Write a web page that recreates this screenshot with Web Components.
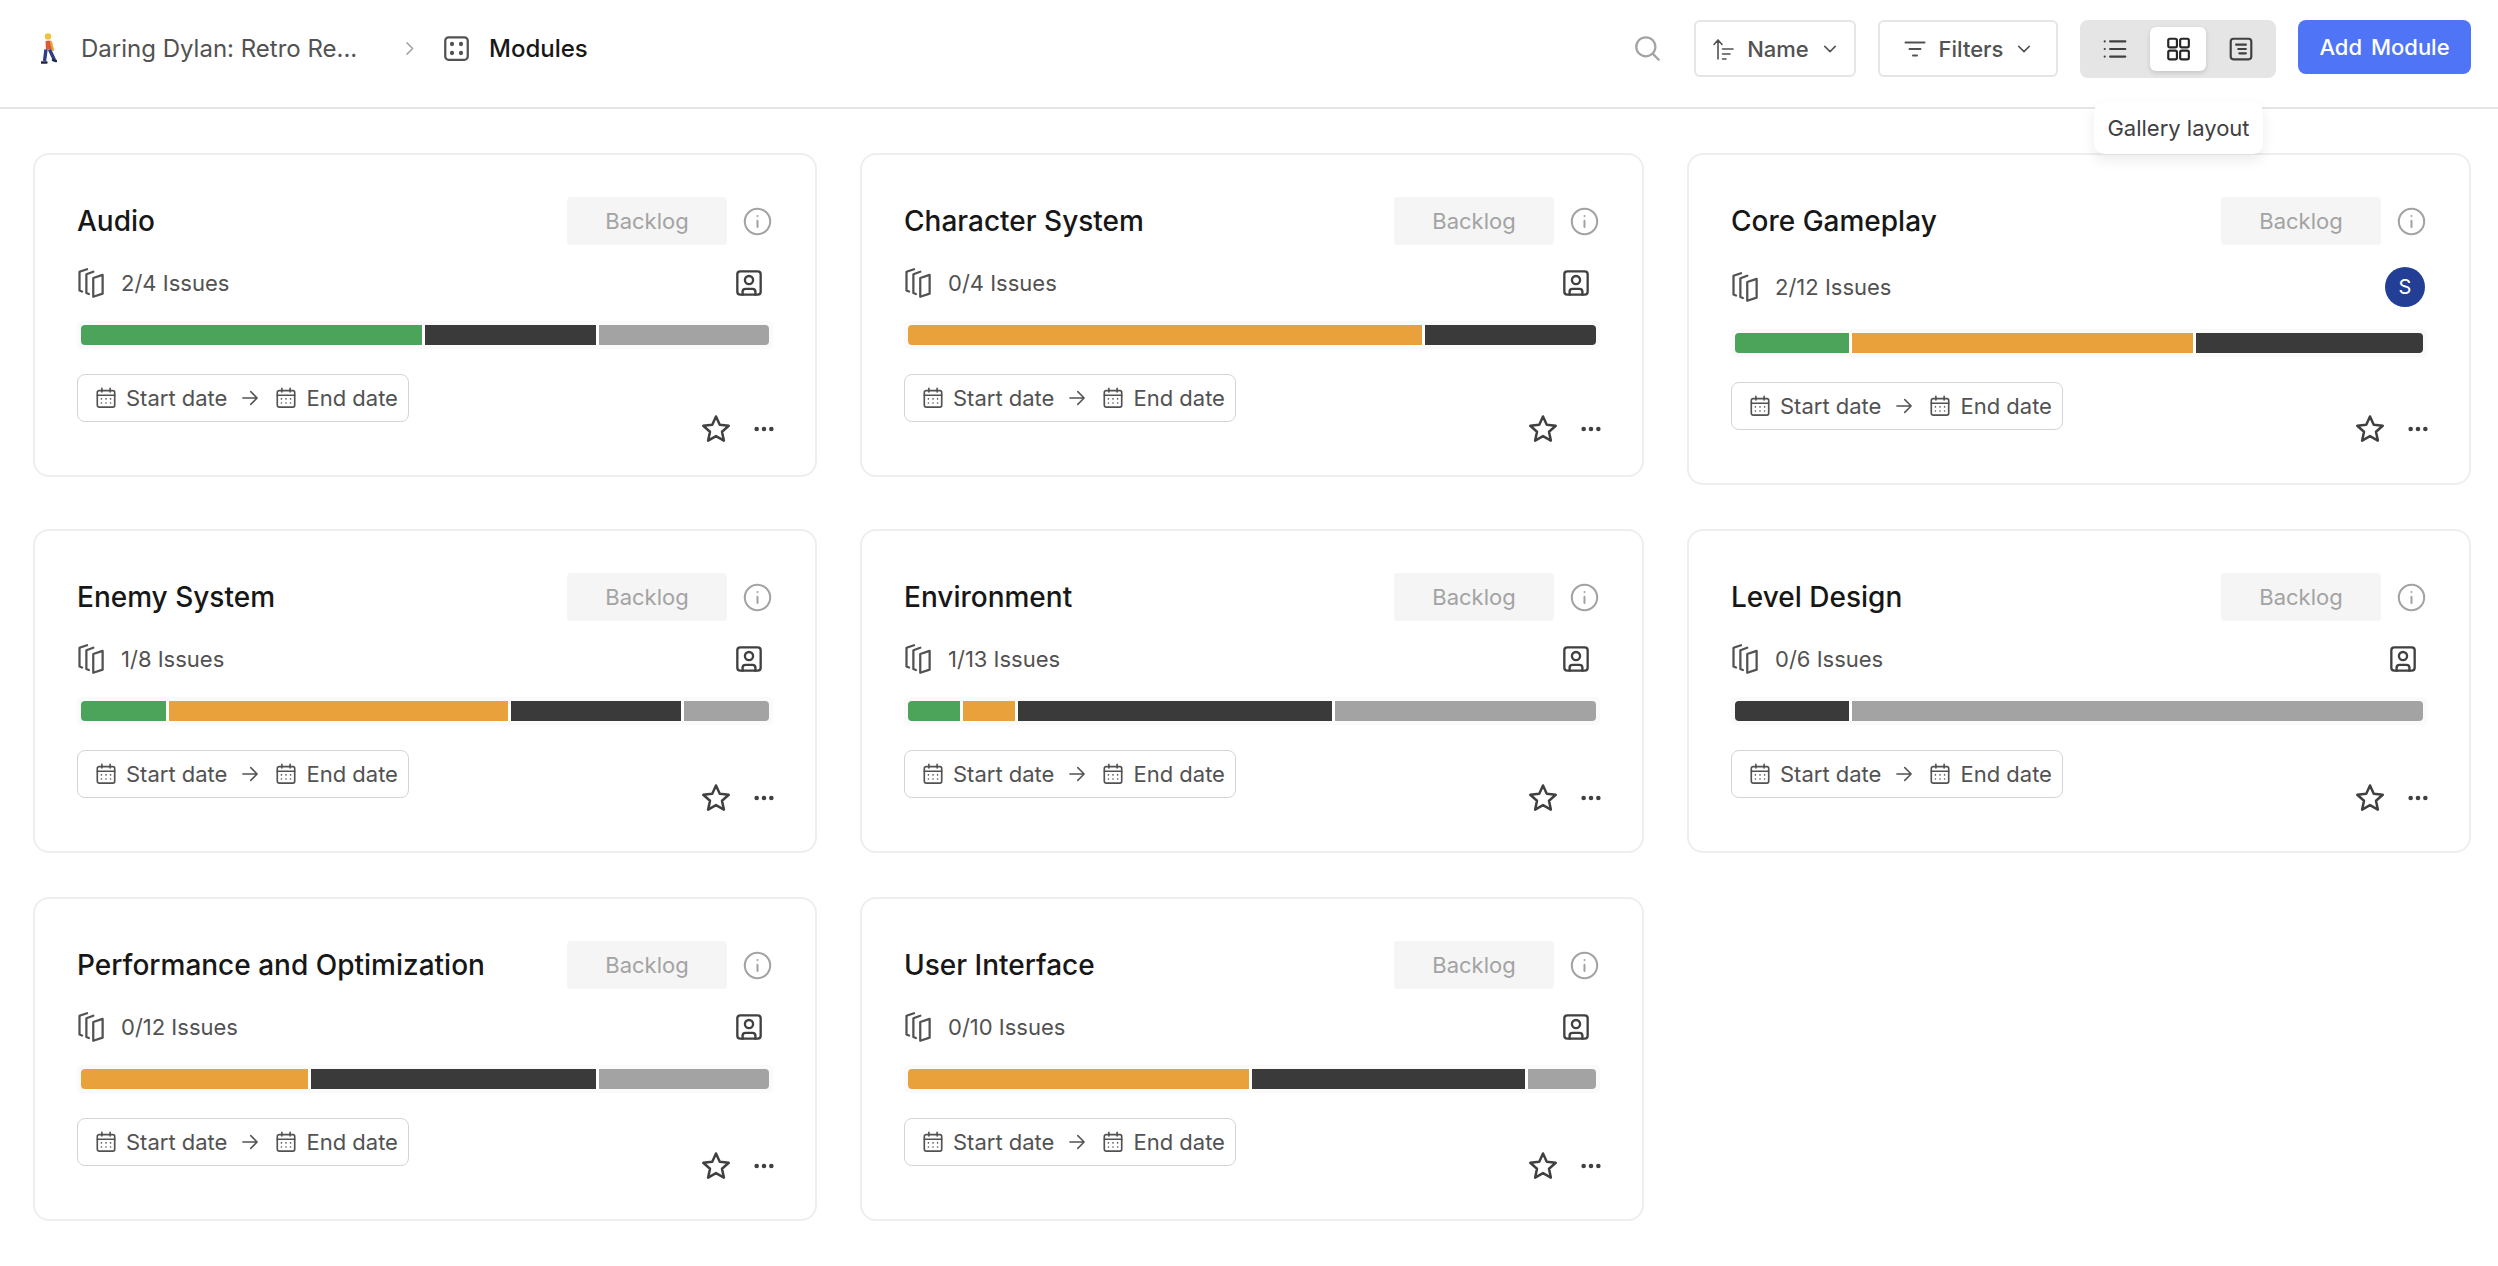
<!DOCTYPE html>
<html>
<head>
<meta charset="utf-8">
<title>Modules</title>
<style>
  html, body { margin: 0; padding: 0; background: #fff; }
  body { font-family: Inter, "Liberation Sans", sans-serif; color: #171717; overflow: hidden; }
</style>
</head>
<body>
<modules-page>
  <modules-header slot="header"></modules-header>
  <module-card name="Audio" issues="2/4 Issues" bars="green:2,dark:1,gray:1" star-top="261">Audio</module-card>
  <module-card name="Character System" issues="0/4 Issues" bars="orange:3,dark:1" star-top="261">Character System</module-card>
  <module-card name="Core Gameplay" issues="2/12 Issues" bars="green:2,orange:6,dark:4" lead="S" star-top="261">Core Gameplay</module-card>
  <module-card name="Enemy System" issues="1/8 Issues" bars="green:1,orange:4,dark:2,gray:1" star-top="254">Enemy System</module-card>
  <module-card name="Environment" issues="1/13 Issues" bars="green:1,orange:1,dark:6,gray:5" star-top="254">Environment</module-card>
  <module-card name="Level Design" issues="0/6 Issues" bars="dark:1,gray:5" star-top="254">Level Design</module-card>
  <module-card name="Performance and Optimization" issues="0/12 Issues" bars="orange:4,dark:5,gray:3" star-top="254">Performance and Optimization</module-card>
  <module-card name="User Interface" issues="0/10 Issues" bars="orange:5,dark:4,gray:1" star-top="254">User Interface</module-card>
</modules-page>

<script>
// stroke icons, all on a 24 box
const ICONS = {
  search: '<circle cx="10.5" cy="10.5" r="8.5"/><path d="M16.8 16.8 22 22"/>',
  chevronRight: '<path d="m8 3 9 9-9 9"/>',
  chevronDown: '<path d="m5 8.5 7 7 7-7"/>',
  modules: '<rect x="2" y="2" width="20" height="20" rx="3"/><g fill="currentColor" stroke="none"><circle cx="8" cy="8" r="1.9"/><circle cx="16" cy="8" r="1.9"/><circle cx="8" cy="16" r="1.9"/><circle cx="16" cy="16" r="1.9"/></g>',
  sort: '<path d="M7 22V3M3 7.5 7 3l4 4.500M11.500 12H22M11.500 17H19M11.500 22H15"/>',
  filter: '<path d="M2.500 5.500h19M6.500 12h11M10 18.500h4"/>',
  list: '<path d="M7.500 5h14M7.500 12h14M7.500 19h14M2.500 5h.01M2.500 12h.01M2.500 19h.01"/>',
  grid: '<rect x="3" y="2.500" width="8" height="8" rx="1.500"/><rect x="14" y="2.500" width="8" height="8" rx="1.500"/><rect x="3" y="13.500" width="8" height="8" rx="1.500"/><rect x="14" y="13.500" width="8" height="8" rx="1.500"/>',
  detail: '<rect x="2.500" y="2.500" width="19" height="19" rx="2.500"/><path d="M7.500 8h9M9.500 12h7M10.500 16h6"/>',
  layers: '<path d="M8 1.500 2 3.500v15l2 .8M13 3.500 7.500 5.500v15l2 .8M20.500 6 13 8.500v15l7.500-2.500z" transform="translate(0 -.5)"/>',
  member: '<rect x="2" y="2" width="20" height="20" rx="2.500"/><circle cx="12" cy="9.500" r="3.500"/><path d="M6.500 22v-2.500a2.500 2.500 0 0 1 2.500-2.500h6a2.500 2.500 0 0 1 2.500 2.500V22"/>',
  info: '<circle cx="12" cy="12" r="10.500"/><path d="M12 11.500v5M12 7.500h.01"/>',
  calendar: '<rect x="2.500" y="4" width="19" height="18" rx="2"/><path d="M7.500 1.500v4M16.500 1.500v4M2.500 9h19M7 13h.01M12 13h.01M17 13h.01M7 17.500h.01M12 17.500h.01M17 17.500h.01"/>',
  arrow: '<path d="M2.500 12h19M13 3.500l8.500 8.500-8.500 8.500"/>',
  star: '<path d="m12 2 3 6.600 7.200.8-5.400 4.800 1.500 7.100L12 17.700l-6.300 3.600 1.500-7.100L1.800 9.400 9 8.600z"/>',
  dots: '<g fill="currentColor" stroke="none"><circle cx="4" cy="12" r="2.500"/><circle cx="12" cy="12" r="2.500"/><circle cx="20" cy="12" r="2.500"/></g>'
};

const icon = (name, size, weight = 2) =>
  `<svg width="${size}" height="${size}" viewBox="0 0 24 24" fill="none" stroke="currentColor" stroke-width="${weight}" stroke-linecap="round" stroke-linejoin="round" style="display:block;flex:none">${ICONS[name]}</svg>`;

class ModulesPage extends HTMLElement {
  connectedCallback() {
    this.attachShadow({ mode: 'open' });
    this.shadowRoot.innerHTML = `
      <style>
        :host { display: block; width: 2498px; height: 1266px; background: #fff; }
        .grid {
          display: grid;
          grid-template-columns: repeat(3, 784px);
          column-gap: 43px;
          row-gap: 44px;
          align-items: start;
          padding: 44px 27px 0 33px;
        }
      </style>
      <slot name="header"></slot>
      <div class="grid"><slot></slot></div>
    `;
  }
}

class ModulesHeader extends HTMLElement {
  connectedCallback() {
    this.attachShadow({ mode: 'open' });
    this.shadowRoot.innerHTML = `
      <style>
        :host {
          display: flex;
          box-sizing: border-box;
          height: 109px;
          padding: 20px 27px 0 41px;
          border-bottom: 2px solid #e5e5e5;
          align-items: flex-start;
          position: relative;
          font: 500 22px Inter, sans-serif;
          color: #525252;
        }
        .crumbs { display: flex; align-items: center; height: 57px; flex: 1; font-size: 24px; }
        .walker { display: block; margin-right: 24px; margin-top: 0; }
        .project { font-weight: 400; width: 288px; white-space: nowrap; }
        .sep { color: #a3a3a3; margin: 0 26px 0 33px; }
        .page { color: #171717; margin-left: 19px; font-weight: 500; }
        .search { height: 57px; display: flex; align-items: center; color: #a3a3a3; margin-right: 33px; }
        .btn {
          box-sizing: border-box;
          height: 57px;
          display: flex;
          align-items: center;
          justify-content: center;
          background: #fff;
          border: 2px solid #e5e5e5;
          border-radius: 6px;
          margin-right: 22px;
          gap: 12px;
        }
        .name { width: 162px; }
        .filters { width: 180px; }
        .toggle {
          box-sizing: border-box;
          width: 196px;
          height: 58px;
          background: #e5e5e5;
          border-radius: 8px;
          display: flex;
          align-items: center;
          padding: 0 7px;
          gap: 7px;
          margin-right: 22px;
          position: relative;
        }
        .mode { flex: 1; height: 44px; display: flex; align-items: center; justify-content: center; border-radius: 6px; color: #404040; }
        .mode.on { background: #fff; box-shadow: 0 2px 5px rgba(0,0,0,.14); color: #262626; }
        .add {
          box-sizing: border-box;
          width: 173px;
          height: 54px;
          background: #4f75f6;
          color: #fff;
          border-radius: 8px;
          display: flex;
          align-items: center;
          justify-content: center;
          word-spacing: 3px;
        }
        .tip {
          position: absolute;
          z-index: 5;
          top: 82px;
          left: 14px;
          width: 169px;
          height: 52px;
          box-sizing: border-box;
          background: #fff;
          border-radius: 10px;
          box-shadow: 0 6px 14px rgba(0,0,0,.08);
          display: flex;
          align-items: center;
          justify-content: center;
          font-weight: 400;
          color: #404040;
          white-space: nowrap;
        }
      </style>
      <div class="crumbs">
        <svg class="walker" width="16" height="31" viewBox="0 0 16 31">
          <circle cx="7" cy="3.500" r="3.200" fill="#f0c33c"/>
          <path d="M4.500 8 9.500 7.500 11.500 16 5 17z" fill="#dd5a33"/>
          <path d="M10 9 12 17" stroke="#e8a53a" stroke-width="2.200" stroke-linecap="round"/>
          <path d="M5 16.500 3.500 28M8.500 16.500 13.500 27" stroke="#2f3f86" stroke-width="3.400" fill="none"/>
          <path d="M0.500 29.500h5M12 27l3 1" stroke="#20263f" stroke-width="2.400" stroke-linecap="round"/>
        </svg>
        <span class="project">Daring Dylan: Retro Re...</span>
        <span class="sep">${icon('chevronRight', 15, 2.4)}</span>
        ${icon('modules', 27, 2)}
        <span class="page">Modules</span>
      </div>
      <div class="search">${icon('search', 27, 2)}</div>
      <div class="btn name">${icon('sort', 24, 1.6)}<span>Name</span>${icon('chevronDown', 18, 2)}</div>
      <div class="btn filters">${icon('filter', 24, 2)}<span>Filters</span>${icon('chevronDown', 18, 2)}</div>
      <div class="toggle">
        <div class="mode">${icon('list', 26, 2)}</div>
        <div class="mode on">${icon('grid', 26, 2)}</div>
        <div class="mode">${icon('detail', 26, 2)}</div>
        <div class="tip">Gallery layout</div>
      </div>
      <div class="add">Add Module</div>
    `;
  }
}

class ModuleCard extends HTMLElement {
  connectedCallback() {
    const bars = this.getAttribute('bars').split(',').map(b => b.split(':'));
    const lead = this.getAttribute('lead');
    this.attachShadow({ mode: 'open' });
    this.shadowRoot.innerHTML = `
      <style>
        :host {
          display: block;
          position: relative;
          box-sizing: border-box;
          padding: 42px 42px 53px;
          background: #fff;
          border: 2px solid #eeeeee;
          border-radius: 16px;
          font: 400 22px Inter, sans-serif;
          color: #525252;
        }
        .top { display: flex; align-items: center; height: 48px; }
        .title { flex: 1; font-size: 28px; font-weight: 500; color: #171717; white-space: nowrap; }
        .state {
          width: 160px;
          height: 48px;
          border-radius: 4px;
          background: #f5f5f5;
          color: #a3a3a3;
          display: flex;
          align-items: center;
          justify-content: center;
        }
        .info { color: #a3a3a3; margin-left: 16px; margin-right: 1px; }
        .meta { display: flex; align-items: center; margin-top: 22px; min-height: 32px; }
        .count { flex: 1; margin-left: 14px; }
        .member { color: #404040; margin-right: 10px; }
        .lead {
          width: 40px;
          height: 40px;
          border-radius: 50%;
          background: #233f95;
          color: #fff;
          font-size: 20px;
          display: flex;
          align-items: center;
          justify-content: center;
          margin-right: 2px;
        }
        .track {
          display: flex;
          box-sizing: border-box;
          height: 28px;
          margin-top: 22px;
          padding: 4px;
          border-radius: 4px;
          background: #fafafa;
        }
        .bar { height: 20px; border-right: 3px solid #fff; box-sizing: border-box; }
        .bar:first-child { border-radius: 4px 0 0 4px; }
        .bar:last-child { border-right: 0; border-radius: 0 4px 4px 0; }
        .green { background: #4ca35a; }
        .orange { background: #e9a23b; }
        .dark { background: #3a3a3a; }
        .gray { background: #a3a3a3; }
        .dates {
          display: inline-flex;
          align-items: center;
          box-sizing: border-box;
          height: 48px;
          width: 332px;
          margin-top: 25px;
          padding-left: 17px;
          border: 1px solid #d4d4d4;
          border-radius: 8px;
          vertical-align: top;
        }
        .dates span { margin-left: 9px; white-space: nowrap; }
        .dates .to { margin: 0 16px 0 14px; }
        .actions {
          position: absolute;
          top: ${this.getAttribute('star-top') - 2}px;
          right: 40px;
          display: flex;
          align-items: center;
          gap: 22px;
          color: #404040;
        }
      </style>
      <div class="top">
        <div class="title"><slot></slot></div>
        <div class="state">Backlog</div>
        <div class="info">${icon('info', 29, 1.700)}</div>
      </div>
      <div class="meta">
        ${icon('layers', 30, 1.800)}
        <div class="count">${this.getAttribute('issues')}</div>
        ${lead ? `<div class="lead">${lead}</div>` : `<div class="member">${icon('member', 28, 2)}</div>`}
      </div>
      <div class="track">
        ${bars.map(([c, n]) => `<div class="bar ${c}" style="flex:${n} ${n} 0"></div>`).join('')}
      </div>
      <div class="dates">
        ${icon('calendar', 22, 1.800)}<span>Start date</span>
        <div class="to">${icon('arrow', 18, 2)}</div>
        ${icon('calendar', 22, 1.800)}<span>End date</span>
      </div>
      <div class="actions">${icon('star', 30, 2)}${icon('dots', 22, 2)}</div>
    `;
  }
}

customElements.define('modules-page', ModulesPage);
customElements.define('modules-header', ModulesHeader);
customElements.define('module-card', ModuleCard);
</script>
</body>
</html>
